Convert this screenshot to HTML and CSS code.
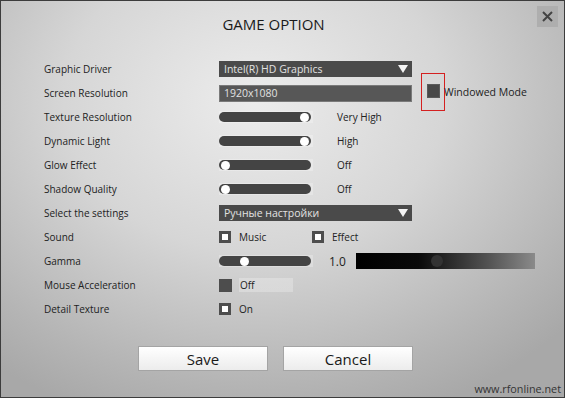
FILE: index.html
```html
<!DOCTYPE html>
<html lang="en">
<head>
    <meta charset="UTF-8">
    <link rel="stylesheet" href="styles.css">
    <title>Game Option</title>
</head>
<body>
<div class="window">
    <div class="header">
        <div class="title">GAME OPTION</div>
        <div class="close">
            <svg width="11" height="11" viewBox="0 0 11 11">
                <path d="M1 1 L10 10 M10 1 L1 10" stroke="#444" stroke-width="2"/>
            </svg>
        </div>
    </div>

    <div class="options">
        <div class="row">
            <div class="label">Graphic Driver</div>
            <div class="select">Intel(R) HD Graphics<span class="arrow"></span></div>
        </div>
        <div class="row">
            <div class="label">Screen Resolution</div>
            <div class="field">1920x1080</div>
            <div class="windowed">
                <span class="highlight"><span class="box dark"></span></span>
                <span class="windowed-text">Windowed Mode</span>
            </div>
        </div>
        <div class="row">
            <div class="label">Texture Resolution</div>
            <div class="slider"><div class="track max"><span class="knob"></span></div></div>
            <div class="value">Very High</div>
        </div>
        <div class="row">
            <div class="label">Dynamic Light</div>
            <div class="slider"><div class="track max"><span class="knob"></span></div></div>
            <div class="value">High</div>
        </div>
        <div class="row">
            <div class="label">Glow Effect</div>
            <div class="slider"><div class="track"><span class="knob"></span></div></div>
            <div class="value">Off</div>
        </div>
        <div class="row">
            <div class="label">Shadow Quality</div>
            <div class="slider"><div class="track"><span class="knob"></span></div></div>
            <div class="value">Off</div>
        </div>
        <div class="row">
            <div class="label">Select the settings</div>
            <div class="select">Ручные настройки<span class="arrow"></span></div>
        </div>
        <div class="row">
            <div class="label">Sound</div>
            <div class="check music"><span class="box"></span>Music</div>
            <div class="check"><span class="box"></span>Effect</div>
        </div>
        <div class="row">
            <div class="label">Gamma</div>
            <div class="slider gamma-slider"><div class="track"><span class="knob gamma-knob"></span></div></div>
            <div class="gamma-value">1.0</div>
            <div class="gamma-bar"><span class="gamma-dot"></span></div>
        </div>
        <div class="row">
            <div class="label">Mouse Acceleration</div>
            <div class="check faded"><span class="box dark"></span>Off</div>
        </div>
        <div class="row">
            <div class="label">Detail Texture</div>
            <div class="check"><span class="box"></span>On</div>
        </div>
    </div>

    <div class="buttons">
        <button>Save</button>
        <button>Cancel</button>
    </div>

    <div class="site">www.rfonline.net</div>
</div>
</body>
</html>
```

FILE: styles.css
```css
body {
    margin: 0;
    font-family: "Open Sans", Arial, sans-serif;
    color: #222;
}

.window {
    width: 565px;
    height: 398px;
    box-sizing: border-box;
    border: 1px solid #3c3c3c;
    background: radial-gradient(ellipse 75% 85% at 45% 25%, #ececec 0%, #d6d6d6 45%, #b4b4b4 85%, #a8a8a8 100%);
    display: flex;
    flex-direction: column;
}

.header {
    height: 56px;
    display: flex;
    justify-content: center;
    position: relative;
}

.title {
    font-size: 15px;
    margin-top: 13px;
    margin-right: 18px;
    color: #1a1a1a;
}

.close {
    position: absolute;
    top: 5px;
    right: 6px;
    width: 21px;
    height: 21px;
    background-color: #aeaeae;
    display: flex;
    align-items: center;
    justify-content: center;
}

.options {
    display: flex;
    flex-direction: column;
    padding-left: 43px;
}

.row {
    height: 24px;
    display: flex;
    align-items: center;
    font-size: 10px;
}

.label {
    width: 175px;
}

.select,
.field {
    width: 193px;
    height: 16px;
    box-sizing: border-box;
    background-color: #4a4a4a;
    color: #e2e2e2;
    font-size: 10.5px;
    line-height: 16px;
    padding-left: 5px;
    display: flex;
    align-items: center;
    justify-content: space-between;
}

.field {
    height: 17px;
    border: 1px solid #7a7a7a;
    background-color: #575757;
    padding-left: 4px;
}

.arrow {
    width: 0;
    height: 0;
    border-left: 5px solid transparent;
    border-right: 5px solid transparent;
    border-top: 8px solid #f4f4f4;
    margin-right: 4px;
}

.windowed {
    display: flex;
    align-items: center;
    margin-left: 9px;
}

.highlight {
    width: 24px;
    height: 38px;
    box-sizing: border-box;
    margin-top: -3px;
    border: 1px solid #d42020;
    display: flex;
    align-items: flex-start;
    justify-content: center;
    padding-top: 10px;
}

.windowed-text {
    font-size: 10.5px;
    margin-left: -1px;
    margin-top: -2px;
}

.box {
    width: 12px;
    height: 12px;
    box-sizing: border-box;
    border: 3px solid #4d4d4d;
    background-color: #fff;
    display: inline-block;
    margin-right: 8px;
}

.box.dark {
    background-color: #4d4d4d;
    border-color: #4d4d4d;
    width: 13px;
    height: 13px;
}

.highlight .box.dark {
    margin-right: 0;
    height: 14px;
    background-color: #484848;
    border-color: #5a5a5a;
    border-width: 1px;
}

.slider {
    width: 94px;
    padding: 1px 0;
    background-color: rgba(255, 255, 255, 0.25);
}

.track {
    width: 92px;
    height: 10px;
    border-radius: 5px;
    background-color: #444;
    display: flex;
    align-items: center;
    padding: 0 2px;
    box-sizing: border-box;
}

.track.max {
    justify-content: flex-end;
}

.knob {
    width: 9px;
    height: 9px;
    border-radius: 50%;
    background-color: #fff;
}

.gamma-knob {
    margin-left: 19px;
}

.value {
    margin-left: 24px;
}

.check {
    display: flex;
    align-items: center;
}

.music {
    width: 93px;
}

.faded {
    width: 74px;
    background: linear-gradient(to right, transparent 20px, rgba(255, 255, 255, 0.25) 20px);
}

.gamma-value {
    font-size: 12px;
    margin-left: 16px;
    width: 27px;
}

.gamma-bar {
    width: 179px;
    height: 16px;
    background: linear-gradient(to right, #000 0%, #0a0a0a 35%, #555 75%, #8a8a8a 100%);
    position: relative;
}

.gamma-dot {
    position: absolute;
    left: 75px;
    top: 2px;
    width: 12px;
    height: 12px;
    border-radius: 50%;
    background-color: #333;
}

.buttons {
    display: flex;
    gap: 15px;
    padding-left: 137px;
    margin-top: 25px;
}

button {
    width: 130px;
    height: 25px;
    border: 1px solid #a4a4a4;
    background: linear-gradient(#ffffff, #ececec);
    font-family: "Open Sans", Arial, sans-serif;
    font-size: 15px;
    color: #1a1a1a;
    padding: 0;
}

.site {
    margin-top: auto;
    align-self: flex-end;
    font-size: 10.8px;
    color: #333;
    margin-right: 3px;
    margin-bottom: 1px;
}
```
